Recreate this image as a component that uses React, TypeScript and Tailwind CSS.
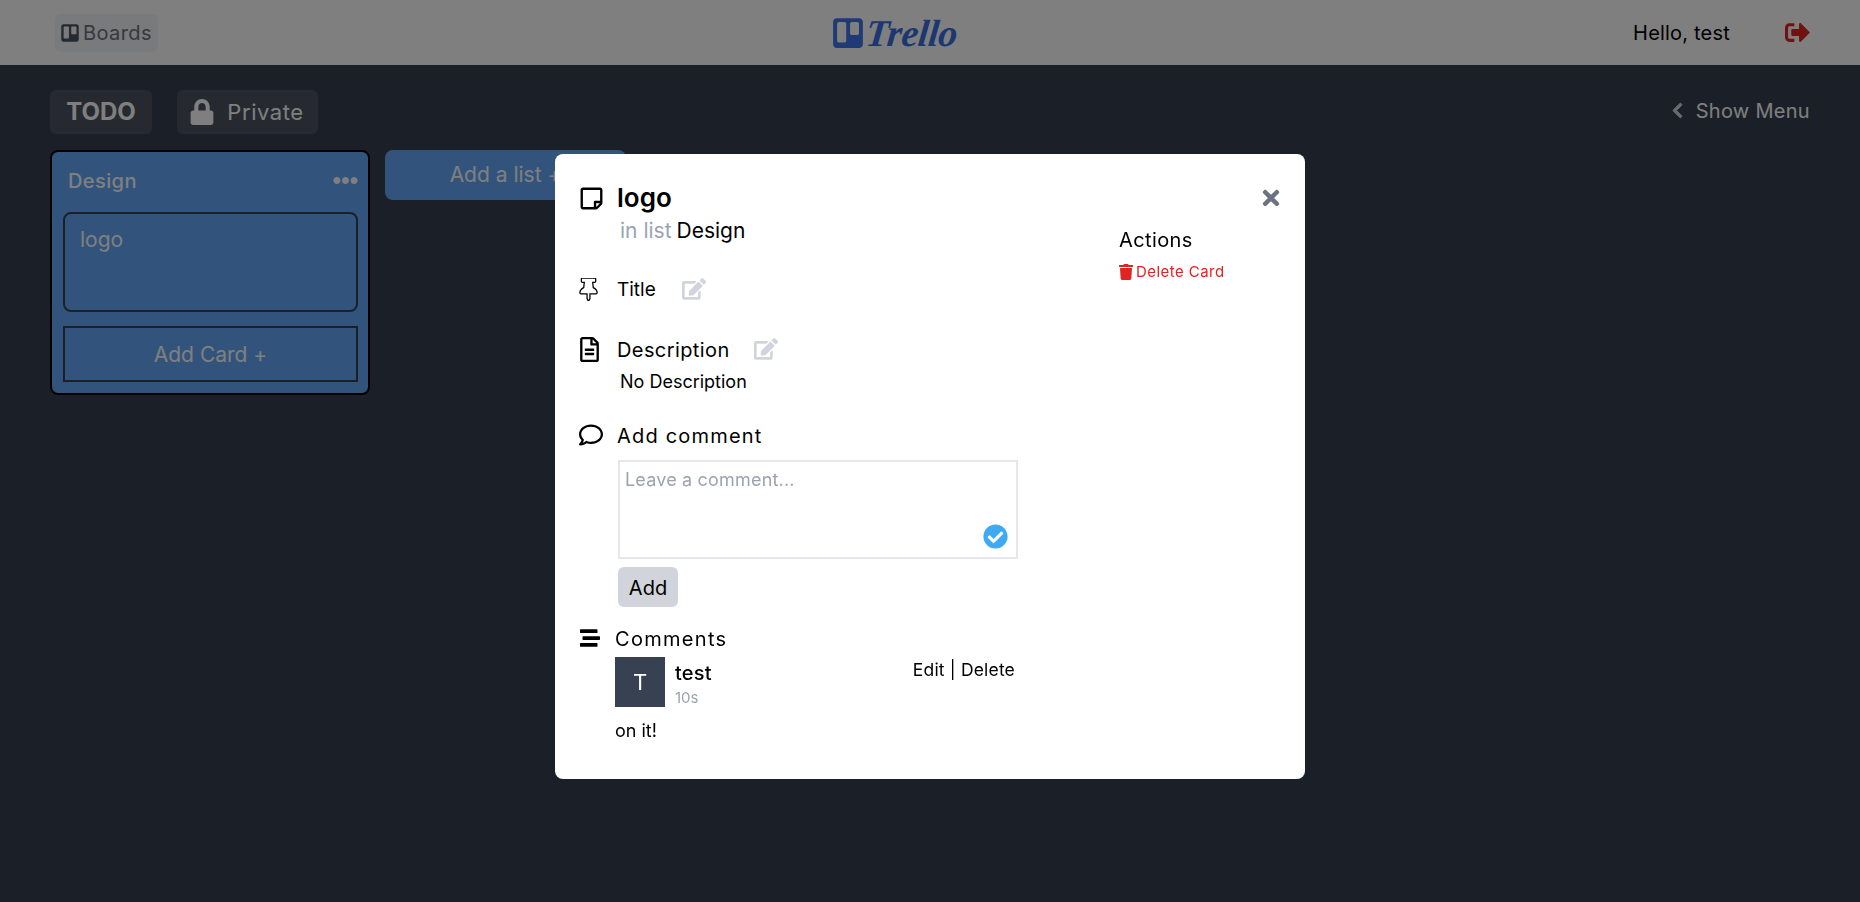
import { FaTrello, FaSignOutAlt, FaLock, FaChevronLeft, FaEllipsisH, FaRegStickyNote, FaRegFileAlt, FaEdit, FaRegComment, FaStream, FaTimes, FaTrash, FaCheckCircle, FaThumbtack } from "react-icons/fa";

export default function App() {
  return (
    <div className="relative h-[902px] w-full overflow-hidden bg-[#374151] font-['Inter','Liberation_Sans',sans-serif] text-black">
      <header className="flex h-[65px] items-center justify-between bg-white pl-[55px] pr-[50px]">
        <div className="flex h-[38px] w-[103px] items-center gap-[3px] rounded-md bg-[#f3f4f6] pl-[5px] text-[#6b7280]">
          <FaTrello className="text-[20px] text-[#4b5563]" />
          <span className="text-[20px] tracking-[0.02em]">Boards</span>
        </div>
        <div className="flex items-center gap-[1px] pr-[3px] text-[#3b6fe0]">
          <FaTrello className="text-[34px] text-[#3f74e8]" />
          <span className="-skew-x-6 font-['Liberation_Serif',serif] text-[38px] font-bold italic leading-none tracking-[-0.01em]">Trello</span>
        </div>
        <div className="flex items-center">
          <span className="text-[20px] tracking-[0.01em]">Hello, test</span>
          <FaSignOutAlt className="ml-[55px] text-[25px] text-[#e02424]" />
        </div>
      </header>

      <div className="flex items-center justify-between px-[50px] pt-[25px]">
        <div className="flex gap-[25px] text-white">
          <div className="flex h-[44px] w-[102px] items-center justify-center rounded-md bg-[#4c5461] text-[24px] font-bold">TODO</div>
          <div className="flex h-[44px] w-[141px] items-center justify-center gap-[12px] rounded-md bg-[#4c5461] pr-[2px]">
            <FaLock className="text-[26px]" />
            <span className="text-[22px] tracking-[0.025em]">Private</span>
          </div>
        </div>
        <div className="-mt-[3px] flex items-center gap-[10px] text-white">
          <FaChevronLeft className="text-[17px] text-[#d1d5db] [&_path]:stroke-current [&_path]:stroke-[30px]" />
          <span className="text-[20px] tracking-[0.015em]">Show Menu</span>
        </div>
      </div>

      <div className="mt-[16px] flex items-start gap-[15px] px-[50px]">
        <div className="h-[245px] w-[320px] rounded-lg border-2 border-black bg-[#64a8f8] pl-[11px] pr-[10px] text-white">
          <div className="flex h-[60px] items-center justify-between pb-[3px] pl-[5px]">
            <span className="text-[20px] font-medium tracking-[0.02em]">Design</span>
            <FaEllipsisH className="text-[25px]" />
          </div>
          <div className="h-[100px] rounded-lg border-2 border-[#374151] px-[15px] py-[12px] text-[21px] leading-[28px]">logo</div>
          <div className="mt-[14px] flex h-[56px] items-center justify-center border-2 border-[#374151] pt-[2px] text-[21px]">Add Card +</div>
        </div>
        <div className="flex h-[50px] w-[241px] items-center justify-center rounded-lg bg-[#64a8f8] text-[21px] text-white">Add a list +</div>
      </div>

      <div className="fixed inset-0 bg-black/50">
        <div className="relative mx-auto mt-[154px] flex h-[625px] w-[750px] rounded-lg bg-white pl-[25px] pt-[26px]">
          <FaTimes className="absolute right-[22px] top-[32px] text-[24px] text-[#6b7280]" />
          <div className="w-[438px]">
            <div className="flex h-[36px] items-center">
              <div className="-ml-[1px] flex w-[38px]"><FaRegStickyNote className="text-[25px]" /></div>
              <span className="pb-[2px] text-[26px] font-semibold">logo</span>
            </div>
            <div className="ml-[40px] mt-[1px] flex h-[28px] items-center gap-[5px] text-[21px]">
              <span className="text-[#9ca3af]">in list</span>
              <span>Design</span>
            </div>
            <div className="mt-[29px] flex h-[30px] items-center">
              <div className="-ml-[3px] flex w-[40px]"><FaThumbtack className="text-[23px] text-white [&_path]:stroke-black [&_path]:stroke-[28px]" /></div>
              <span className="pt-[2px] text-[19px]">Title</span>
              <FaEdit className="ml-[26px] text-[24px] text-[#d1d5db]" />
            </div>
            <div className="mt-[30px] flex h-[30px] items-center">
              <div className="-ml-[3px] flex w-[40px]"><FaRegFileAlt className="text-[25px]" /></div>
              <span className="pt-[2px] text-[20px] tracking-[0.02em]">Description</span>
              <FaEdit className="ml-[24px] text-[24px] text-[#d1d5db]" />
            </div>
            <div className="ml-[40px] mt-[3px] flex h-[28px] items-center text-[18px]">No Description</div>
            <div className="mt-[25px] flex h-[30px] items-center">
              <div className="-ml-[1px] flex w-[38px]"><FaRegComment className="text-[24px]" /></div>
              <span className="pt-[2px] text-[20px] tracking-[0.06em]">Add comment</span>
            </div>
            <div className="relative ml-[38px] mt-[10px] h-[99px] w-[400px] border-2 border-[#e5e7eb] px-[5px] py-[4px] text-[18px] tracking-[0.01em] text-[#9ca3af]">
              Leave a comment...
              <FaCheckCircle className="absolute bottom-[8px] right-[8px] text-[25px] text-[#3fa9f5]" />
            </div>
            <div className="ml-[38px] mt-[8px] flex h-[40px] w-[60px] items-center justify-center rounded-md bg-[#d1d5db] pt-[2px] text-[20px]">Add</div>
            <div className="mt-[16px] flex h-[30px] items-center">
              <div className="flex w-[35px]"><FaStream className="text-[20px]" /></div>
              <span className="pt-[2px] text-[20px] tracking-[0.065em]">Comments</span>
            </div>
            <div className="ml-[35px] mt-[4px] flex h-[50px]">
              <div className="flex h-[50px] w-[50px] items-center justify-center bg-[#374151] text-[22px] text-white">T</div>
              <div className="ml-[10px] flex flex-col pt-[2px]">
                <span className="text-[20px] font-medium leading-[28px] tracking-[0.01em]">test</span>
                <span className="text-[15px] leading-[22px] text-[#9ca3af]">10s</span>
              </div>
              <span className="ml-auto mr-[3px] text-[17.5px] leading-[26px] tracking-[0.01em]">Edit | Delete</span>
            </div>
            <div className="ml-[35px] mt-[9px] flex h-[28px] items-center text-[18px]">on it!</div>
          </div>
          <div className="ml-[101px] pt-[46px]">
            <div className="flex h-[28px] items-center text-[20px] tracking-[0.02em]">Actions</div>
            <div className="-ml-[1px] mt-[4px] flex h-[28px] items-center gap-[2px] text-[15px] tracking-[0.03em] text-[#e02424]">
              <FaTrash className="text-[16px]" />
              <span>Delete Card</span>
            </div>
          </div>
        </div>
      </div>
    </div>
  );
}
